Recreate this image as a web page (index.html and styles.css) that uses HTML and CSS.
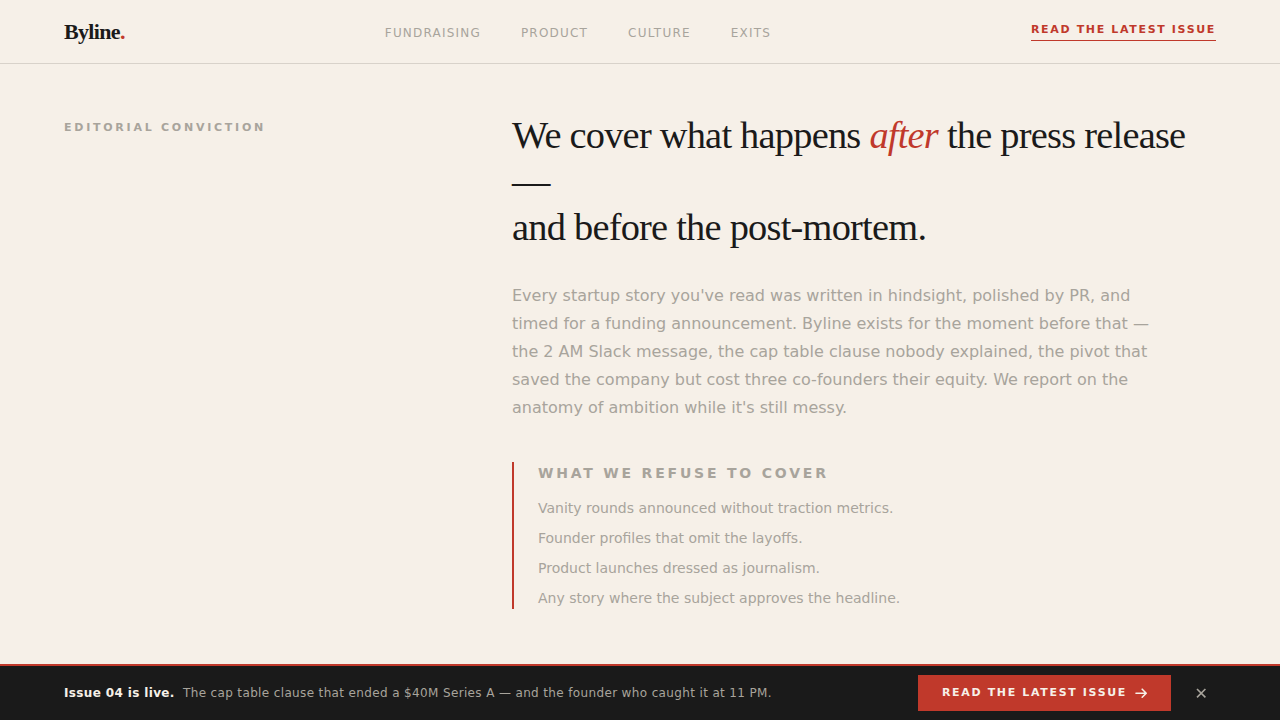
FILE: index.html
```
<!DOCTYPE html>
<html lang="en">
<head>
    <meta charset="UTF-8">
    <meta name="viewport" content="width=device-width, initial-scale=1.0">
    <title>Byline.</title>
    <link rel="stylesheet" href="styles.css">
</head>
<body>
    <header class="site-header">
        <a href="#" class="logo">Byline<span>.</span></a>
        <nav class="site-nav">
            <a href="#fundraising">Fundraising</a>
            <a href="#product">Product</a>
            <a href="#culture">Culture</a>
            <a href="#exits">Exits</a>
        </nav>
        <a href="#latest" class="header-cta">Read the latest issue</a>
    </header>

    <main class="manifesto">
        <p class="section-label">Editorial conviction</p>
        <div class="manifesto-body">
            <h1>We cover what happens <em>after</em> the press release —<br>and before the post-mortem.</h1>
            <p class="lede">Every startup story you've read was written in hindsight, polished by PR, and timed for a funding announcement. Byline exists for the moment before that — the 2 AM Slack message, the cap table clause nobody explained, the pivot that saved the company but cost three co-founders their equity. We report on the anatomy of ambition while it's still messy.</p>
            <section class="refusals">
                <h2>What we refuse to cover</h2>
                <ul>
                    <li>Vanity rounds announced without traction metrics.</li>
                    <li>Founder profiles that omit the layoffs.</li>
                    <li>Product launches dressed as journalism.</li>
                    <li>Any story where the subject approves the headline.</li>
                </ul>
            </section>
        </div>
    </main>

    <!-- Sticky issue bar -->
    <aside class="issue-bar">
        <p class="issue-text"><strong>Issue 04 is live.</strong> The cap table clause that ended a $40M Series A — and the founder who caught it at 11 PM.</p>
        <div class="issue-actions">
            <a href="#latest" class="issue-cta">
                Read the latest issue
                <svg width="12" height="12" viewBox="0 0 12 12" fill="none" stroke="currentColor" stroke-width="1.6" stroke-linecap="round" stroke-linejoin="round" aria-hidden="true">
                    <path d="M1 6.2h10.2M7.2 2.2l4 4-4 4"/>
                </svg>
            </a>
            <button type="button" class="issue-close" aria-label="Dismiss">
                <svg width="10" height="10" viewBox="0 0 10 10" fill="none" stroke="currentColor" stroke-width="1.6" aria-hidden="true">
                    <path d="M1 1l8.4 8.4M9.4 1L1 9.4"/>
                </svg>
            </button>
        </div>
    </aside>

    <script>
        const issueBar = document.querySelector('.issue-bar');
        document.querySelector('.issue-close').addEventListener('click', function() {
            issueBar.remove();
        });
    </script>
</body>
</html>
```
FILE: styles.css
```
:root {
    --paper: #f6f0e8;
    --ink: #1a1a1a;
    --red: #c0392b;
    --muted: #a8a49c;
    --rule: #d8d2ca;
}
* {
    box-sizing: border-box;
    margin: 0;
    padding: 0;
}
body {
    background: var(--paper);
    color: var(--ink);
    font-family: "DejaVu Sans", sans-serif;
    font-size: 16px;
}
a {
    color: inherit;
    text-decoration: none;
}

/* Header */
.site-header {
    display: flex;
    align-items: center;
    justify-content: space-between;
    height: 64px;
    padding: 0 64px;
    border-bottom: 1px solid var(--rule);
}
.logo {
    font-family: "Liberation Serif", serif;
    font-size: 22px;
    font-weight: 700;
    letter-spacing: -0.03em;
}
.logo span {
    color: var(--red);
}
.site-nav {
    display: flex;
    gap: 40px;
    padding-top: 2px;
    color: var(--muted);
    font-size: 12px;
    line-height: 18px;
    letter-spacing: 0.1em;
    text-transform: uppercase;
}
.header-cta {
    padding-bottom: 2px;
    border-bottom: 1px solid var(--red);
    color: var(--red);
    font-size: 11px;
    font-weight: 700;
    line-height: 16px;
    letter-spacing: 0.15em;
    text-transform: uppercase;
}

/* Manifesto */
.manifesto {
    display: grid;
    grid-template-columns: 1fr 2fr;
    gap: 96px;
    padding: 48px 64px 112px;
}
.section-label {
    padding-top: 8px;
    color: var(--muted);
    font-size: 11px;
    font-weight: 700;
    line-height: 16px;
    letter-spacing: 0.25em;
    text-transform: uppercase;
}
h1 {
    margin-bottom: 32px;
    font-family: "Liberation Serif", serif;
    font-size: clamp(28px, 3vw, 52px);
    font-weight: 400;
    line-height: 1.2;
    letter-spacing: -0.02em;
}
h1 em {
    color: var(--red);
}
.lede {
    max-width: 640px;
    margin-bottom: 40px;
    color: var(--muted);
    line-height: 28px;
}
.refusals {
    padding-left: 24px;
    border-left: 2px solid var(--red);
    color: var(--muted);
    font-size: 14px;
    line-height: 22px;
}
.refusals h2 {
    margin-bottom: 13px;
    font-size: 14px;
    letter-spacing: 0.2em;
    text-transform: uppercase;
}
.refusals ul {
    display: grid;
    gap: 8px;
    list-style: none;
}

/* Sticky issue bar */
.issue-bar {
    position: fixed;
    right: 0;
    bottom: 0;
    left: 0;
    display: flex;
    align-items: center;
    justify-content: space-between;
    gap: 24px;
    padding: 9px 64px;
    border-top: 2px solid var(--red);
    background: var(--ink);
}
.issue-text {
    color: var(--muted);
    font-size: 12px;
    letter-spacing: 0.03em;
}
.issue-text strong {
    margin-right: 4px;
    color: var(--paper);
}
.issue-actions {
    display: flex;
    align-items: center;
    gap: 15px;
}
.issue-cta {
    display: flex;
    align-items: center;
    gap: 8px;
    height: 36px;
    padding: 0 24px;
    background: var(--red);
    color: var(--paper);
    font-size: 11px;
    font-weight: 700;
    line-height: 14px;
    letter-spacing: 0.15em;
    text-transform: uppercase;
    white-space: nowrap;
}
.issue-close {
    display: grid;
    place-items: center;
    width: 30px;
    height: 30px;
    border: 0;
    background: none;
    color: var(--muted);
    cursor: pointer;
}
```
